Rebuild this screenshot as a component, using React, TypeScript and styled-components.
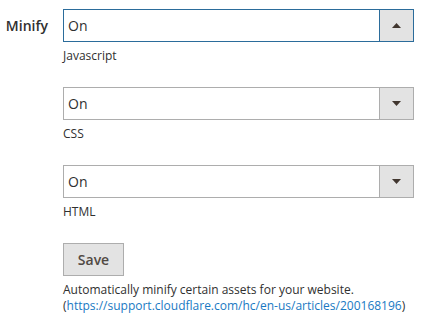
import React from "react";
import styled, { createGlobalStyle } from "styled-components";

const Global = createGlobalStyle`
  html, body { margin: 0; padding: 0; background: #ffffff; }
  body { font-family: "Open Sans", "Liberation Sans", sans-serif; color: #303030; }
`;

const Form = styled.div`
  display: grid;
  grid-template-columns: 63px 351px;
  padding-top: 9px;
`;

const Label = styled.div`
  font-size: 14px;
  font-weight: 600;
  color: #303030;
  text-align: right;
  padding-right: 15px;
  height: 33px;
  line-height: 33px;
  box-sizing: border-box;
`;

const Controls = styled.div`
  display: flex;
  flex-direction: column;
`;

const Field = styled.div`
  margin-bottom: 22px;
`;

const SelectBox = styled.div<{ $focused?: boolean }>`
  display: flex;
  height: 33px;
  box-sizing: border-box;
  border: 1px solid ${(p) => (p.$focused ? "#2b6c9b" : "#adadad")};
  background: #fff;
`;

const Value = styled.div`
  flex: 1;
  font-size: 14px;
  line-height: 31px;
  padding-left: 4px;
  color: #303030;
`;

const ArrowBtn = styled.div<{ $focused?: boolean }>`
  width: 33px;
  display: flex;
  align-items: center;
  justify-content: center;
  background: #e3e3e3;
  border-left: 1px solid ${(p) => (p.$focused ? "#2b6c9b" : "#adadad")};
`;

const Note = styled.div`
  margin-top: 5px;
  font-size: 12px;
  line-height: 18px;
  color: #303030;
`;

const SaveButton = styled.button`
  align-self: flex-start;
  height: 33px;
  width: 61px;
  padding: 0;
  background: #e3e3e3;
  border: 1px solid #adadad;
  font-family: "Open Sans", "Liberation Sans", sans-serif;
  font-size: 14px;
  font-weight: 600;
  color: #514943;
`;

const Description = styled.div`
  margin-top: 6px;
  font-size: 12px;
  line-height: 16px;
  color: #303030;
`;

const Link = styled.a`
  color: #1979c3;
  text-decoration: none;
`;

const Arrow = ({ up }: { up?: boolean }) => (
  <svg width="9" height="5" viewBox="0 0 9 5">
    {up ? (
      <polygon points="0,5 9,5 4.5,0" fill="#41362f" />
    ) : (
      <polygon points="0,0 9,0 4.5,5" fill="#41362f" />
    )}
  </svg>
);

const Select = ({ focused, note }: { focused?: boolean; note: string }) => (
  <Field>
    <SelectBox $focused={focused}>
      <Value>On</Value>
      <ArrowBtn $focused={focused}>
        <Arrow up={focused} />
      </ArrowBtn>
    </SelectBox>
    <Note>{note}</Note>
  </Field>
);

export default function App() {
  return (
    <>
      <Global />
      <Form>
        <Label>Minify</Label>
        <Controls>
          <Select focused note="Javascript" />
          <Select note="CSS" />
          <Select note="HTML" />
          <SaveButton>Save</SaveButton>
          <Description>
            Automatically minify certain assets for your website.
            <br />(
            <Link href="#">https://support.cloudflare.com/hc/en-us/articles/200168196</Link>)
          </Description>
        </Controls>
      </Form>
    </>
  );
}
